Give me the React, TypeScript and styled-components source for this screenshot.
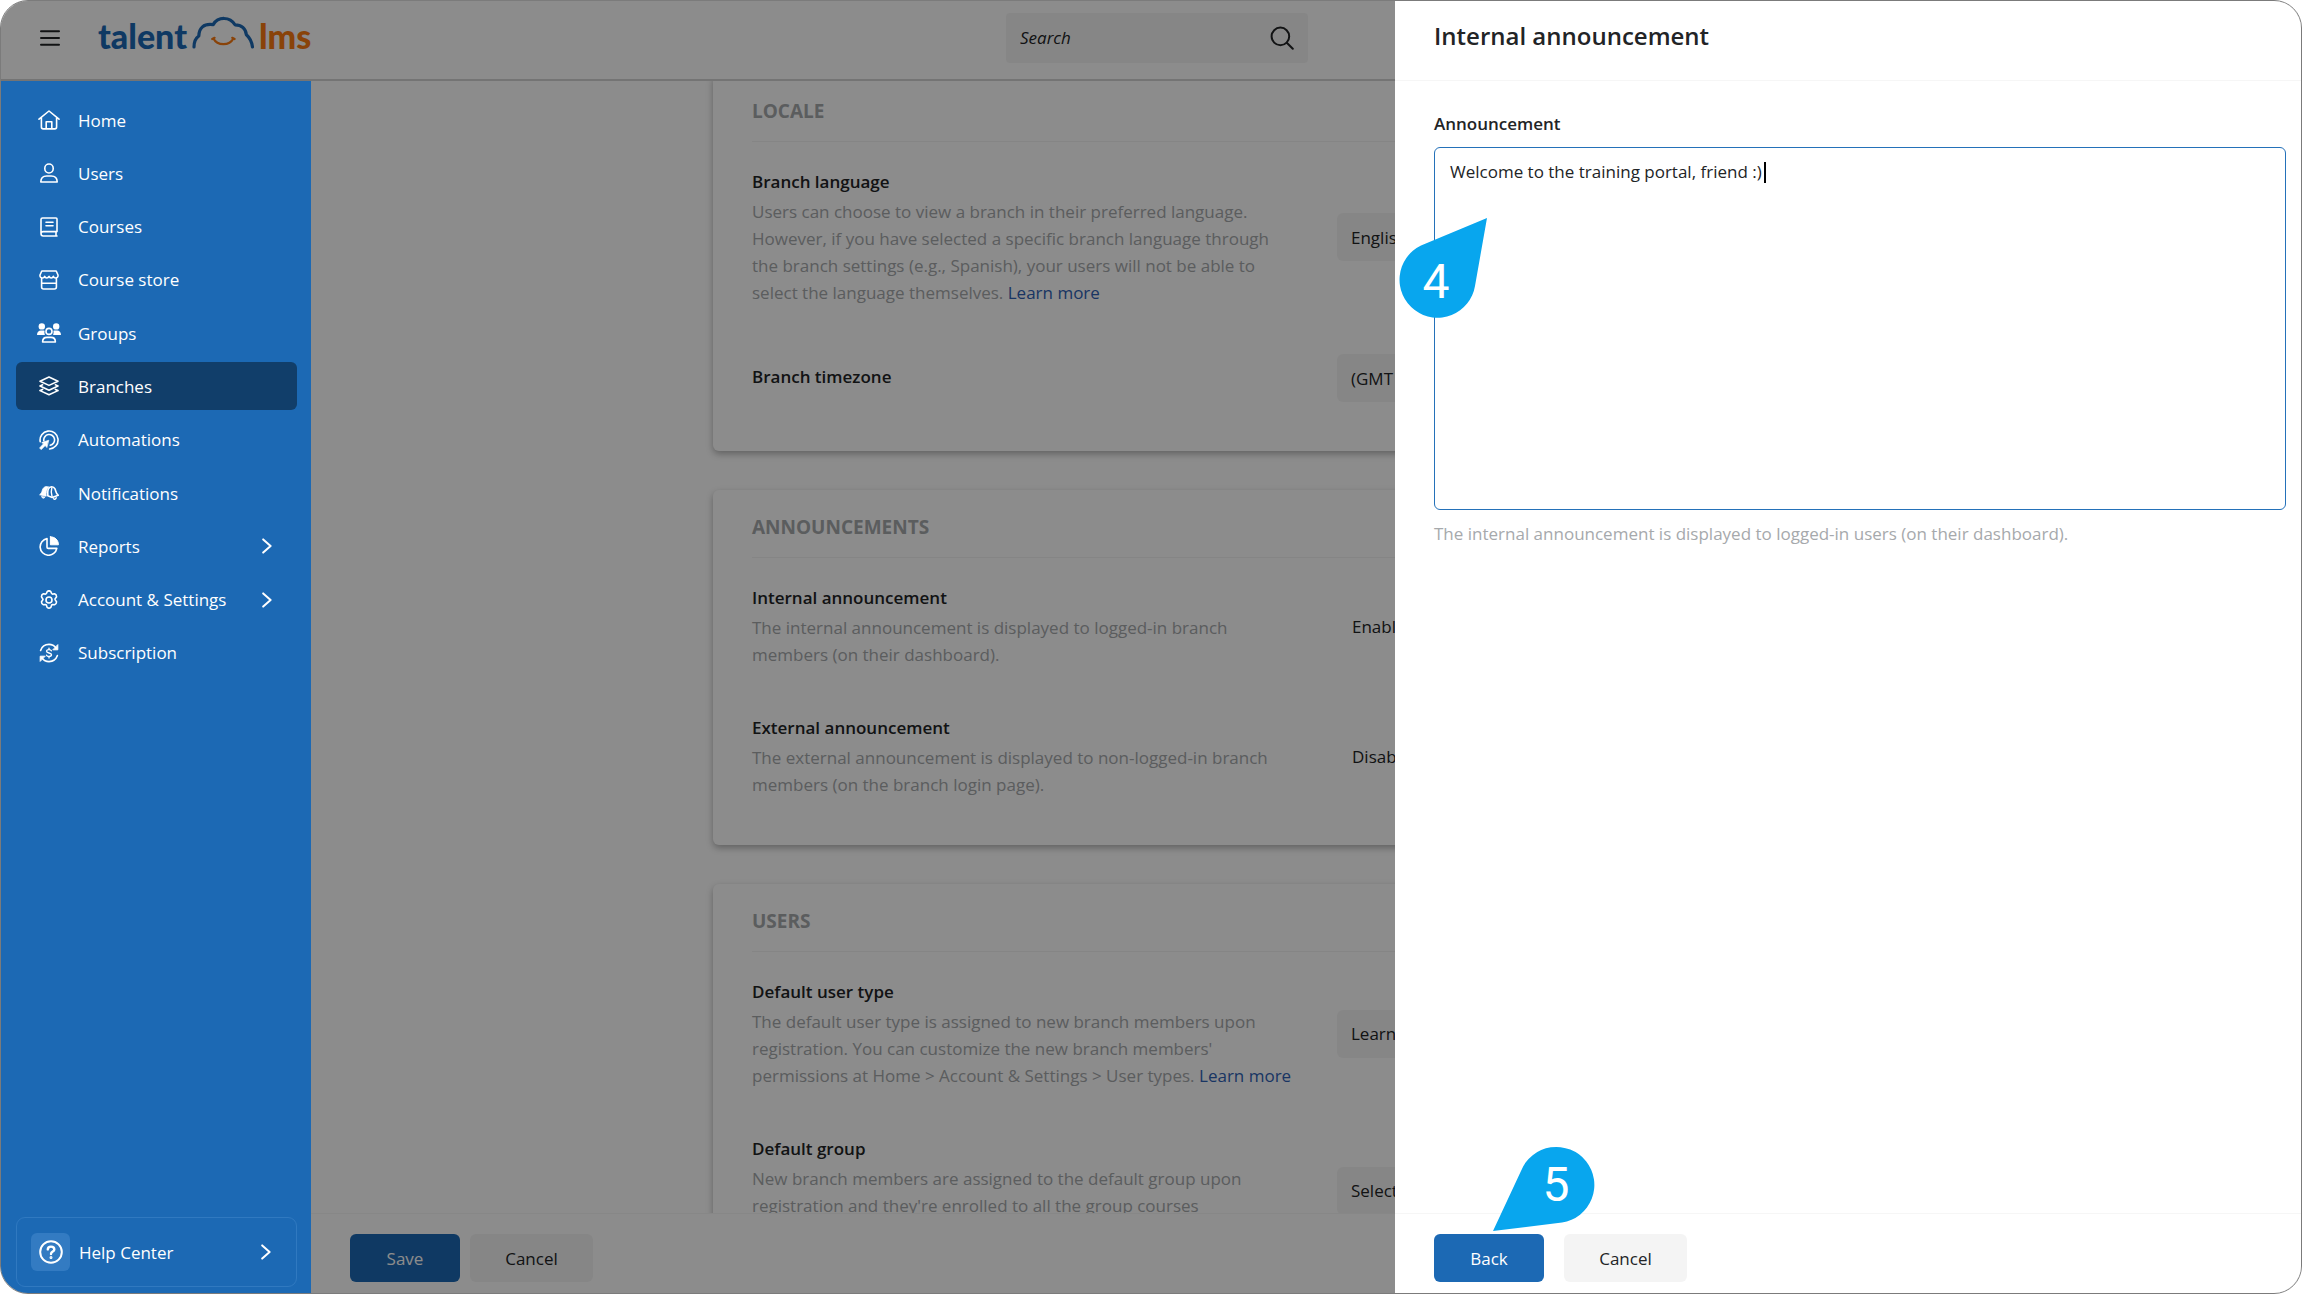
import React, { useId } from 'react';
import styled, { createGlobalStyle, css } from 'styled-components';

const color = {
  primary: '#1c69b4',
  active: '#113e6a',
  ink: '#222426',
  muted: '#a6a9ac',
  field: '#f5f5f5',
  line: '#f6f6f6',
  callout: '#08a6ee',
};

const Global = createGlobalStyle`
  * { box-sizing: border-box; }
  html, body, #root { height: 100%; }
  body { margin: 0; background: #fff; }
  body, button, input, textarea, select {
    font-family: "Open Sans", "Noto Sans", sans-serif;
    font-size: 17px;
    line-height: 27px;
    color: ${color.ink};
  }
`;

const Frame = styled.div`
  position: relative;
  display: flex;
  flex-direction: column;
  height: 100%;
  overflow: hidden;
  border: 1px solid #7b7b7b;
  border-radius: 28px;
  background: #fff;
`;

const Scrim = styled.div`
  position: absolute;
  inset: 0;
  background: rgba(0, 0, 0, 0.45);
`;

/* ---------- top bar ---------- */

const TopBar = styled.header`
  flex: none;
  display: grid;
  grid-template-columns: 1fr 302px 1fr;
  align-items: center;
  height: 80px;
  padding: 0 27px 5px 39px;
  border-bottom: 2px solid #d4d4d4;
`;

const Brand = styled.div`
  display: flex;
  align-items: center;
  gap: 38px;
`;

const IconButton = styled.button`
  display: flex;
  padding: 0;
  border: 0;
  background: none;
`;

const Logo = styled.a`
  display: flex;
  align-items: baseline;
  gap: 4px;
  margin-bottom: 4px;
  font-family: Lato, sans-serif;
  font-size: 34px;
  font-weight: 900;
  line-height: 40px;
  color: ${color.primary};
  text-decoration: none;
`;

const LogoSuffix = styled.span`
  color: #f97a12;
`;

const SearchBox = styled.label`
  display: flex;
  align-items: center;
  height: 50px;
  padding: 0 14px;
  border-radius: 4px;
  background: ${color.field};
`;

const SearchInput = styled.input`
  flex: 1;
  min-width: 0;
  padding: 0;
  border: 0;
  background: none;
  outline: 0;
  &::placeholder {
    color: ${color.ink};
    font-style: italic;
    opacity: 1;
  }
`;

/* ---------- sidebar ---------- */

const Body = styled.div`
  flex: 1;
  display: flex;
  min-height: 0;
`;

const Sidebar = styled.aside`
  position: relative;
  z-index: 1;
  flex: none;
  display: flex;
  flex-direction: column;
  justify-content: space-between;
  width: 310px;
  padding: 15px 14px 6px 15px;
  background: ${color.primary};
`;

const NavList = styled.nav`
  display: flex;
  flex-direction: column;
  justify-content: space-between;
  height: 581px;
`;

const NavLink = styled.a<{ $active?: boolean }>`
  display: flex;
  align-items: center;
  height: 48px;
  padding: 0 25px 0 20px;
  border-radius: 6px;
  color: #fff;
  font-weight: 500;
  text-decoration: none;
  background: ${(p) => (p.$active ? color.active : 'transparent')};
`;

const NavIcon = styled.span`
  flex: none;
  display: flex;
  justify-content: center;
  width: 26px;
  margin-right: 16px;
`;

const NavLabel = styled.span`
  flex: 1;
`;

const HelpLink = styled.a`
  display: flex;
  align-items: center;
  height: 70px;
  padding: 0 25px 0 14px;
  border: 1px solid #3079c0;
  border-radius: 9px;
  color: #fff;
  font-weight: 500;
  text-decoration: none;
`;

const HelpBadge = styled.span`
  display: flex;
  align-items: center;
  justify-content: center;
  width: 39px;
  height: 38px;
  margin-right: 9px;
  border-radius: 6px;
  background: #337bc2;
`;

/* ---------- settings page ---------- */

const Main = styled.main`
  flex: 1;
  display: flex;
  flex-direction: column;
  min-width: 0;
`;

const Scroller = styled.div`
  flex: 1;
  min-height: 0;
  overflow: hidden;
`;

const CardStack = styled.div`
  display: flex;
  flex-direction: column;
  gap: 39px;
  max-width: 1186px;
  margin: -7px auto 0;
`;

const Card = styled.section`
  padding: 0 39px 47px;
  border-radius: 6px;
  box-shadow: 0 3px 7px rgba(0, 0, 0, 0.3);
`;

const CardTitle = styled.h2`
  height: 68px;
  margin: 0 0 26px;
  padding-top: 24px;
  border-bottom: 1px solid #f2f2f2;
  font-size: 19px;
  font-weight: 700;
  line-height: 27px;
  color: ${color.muted};
`;

const Rows = styled.div`
  display: flex;
  flex-direction: column;
  gap: 46px;
`;

const Row = styled.div`
  display: grid;
  grid-template-columns: 545px 1fr;
  column-gap: 40px;
  align-items: center;
  min-height: 52px;
`;

const fieldTitle = css`
  display: block;
  margin: 0 0 3px;
  font-size: 17px;
  font-weight: 600;
  line-height: 27px;
`;

const RowLabel = styled.label`
  ${fieldTitle}
`;

const RowHeading = styled.h3`
  ${fieldTitle}
`;

const Hint = styled.p<{ $lines: number }>`
  min-height: ${(p) => p.$lines * 27}px;
  margin: 0;
  color: ${color.muted};
  white-space: nowrap;
`;

const TextLink = styled.a`
  color: #2f62b5;
  text-decoration: none;
`;

const Select = styled.select`
  appearance: none;
  width: 100%;
  height: 48px;
  padding: 0 14px;
  border: 0;
  border-radius: 6px;
  background: ${color.field};
`;

const State = styled.span`
  padding-left: 15px;
`;

/* ---------- buttons and footers ---------- */

const Footer = styled.footer<{ $gap: number }>`
  flex: none;
  display: flex;
  gap: ${(p) => p.$gap}px;
  padding: 20px 39px 11px;
  border-top: 1px solid ${color.line};
`;

const Button = styled.button<{ $primary?: boolean }>`
  width: ${(p) => (p.$primary ? 110 : 123)}px;
  height: 48px;
  padding: 0;
  border: 0;
  border-radius: 6px;
  background: ${(p) => (p.$primary ? color.primary : '#f4f4f4')};
  color: ${(p) => (p.$primary ? '#fff' : color.ink)};
`;

/* ---------- drawer ---------- */

const Drawer = styled.section`
  position: absolute;
  z-index: 2;
  top: 0;
  right: 0;
  bottom: 0;
  display: flex;
  flex-direction: column;
  width: 906px;
  background: #fff;
`;

const DrawerHeader = styled.header`
  flex: none;
  height: 80px;
  padding: 19px 39px;
  border-bottom: 1px solid ${color.line};
`;

const DrawerTitle = styled.h1`
  margin: 0;
  font-size: 24px;
  font-weight: 600;
  line-height: 32px;
`;

const DrawerBody = styled.div`
  flex: 1;
  padding: 29px 15px 0 39px;
`;

const DrawerLabel = styled.label`
  display: block;
  margin-bottom: 10px;
  font-size: 17px;
  font-weight: 600;
`;

const Editor = styled.div`
  position: relative;
  display: flex;
`;

const TextArea = styled.textarea`
  width: 100%;
  height: 363px;
  padding: 10px 15px;
  border: 1px solid #2471b9;
  border-radius: 6px;
  outline: 0;
  resize: none;
`;

const Caret = styled.span`
  position: absolute;
  top: 15px;
  left: 330px;
  width: 2px;
  height: 21px;
  background: #000;
`;

const DrawerHint = styled.p`
  margin: 10px 0 0;
  color: ${color.muted};
`;

/* ---------- callouts ---------- */

const Pin = styled.svg<{ $right: number; $top?: number; $bottom?: number }>`
  position: absolute;
  z-index: 3;
  right: ${(p) => p.$right}px;
  ${(p) => (p.$top !== undefined ? `top: ${p.$top}px;` : `bottom: ${p.$bottom}px;`)}
  font-family: Roboto, sans-serif;
  font-size: 48px;
`;

/* ---------- icons ---------- */

const Glyph = ({ w = 20, h = 20, children }: { w?: number; h?: number; children: React.ReactNode }) => (
  <svg width={w} height={h} viewBox={`0 0 ${w} ${h}`} fill="none" stroke="currentColor" strokeWidth="1.6" strokeLinecap="round" strokeLinejoin="round" aria-hidden="true">
    {children}
  </svg>
);

const HomeIcon = () => (
  <Glyph w={22}>
    <path d="M1 9.200 11 1l10 8.200M3.400 7.600V17c0 1.200.6 1.900 1.800 1.900h11.600c1.200 0 1.800-.7 1.800-1.900V7.600M8.200 18.600v-6.800h5.600v6.800" />
  </Glyph>
);
const UserIcon = () => (
  <Glyph>
    <rect x="5.800" y="1" width="8.400" height="9" rx="4.200" />
    <path d="M1.800 19c0-4 2.700-6 6-6h4.400c3.300 0 6 2 6 6z" />
  </Glyph>
);
const CourseIcon = () => (
  <Glyph>
    <path d="M18 14.600V2c0-.7-.4-1-1-1H3.600C2.400 1 2 1.600 2 2.600v14c0 1.600.8 2.400 2.200 2.400H18M2 16.800c0-1.400.8-2.200 2.200-2.200H18M17 14.600V19M7 5.200h7M7 8.800h7" />
  </Glyph>
);
const StoreIcon = () => (
  <Glyph>
    <path d="M2.800 1h14.400L19 5c.3 2-1 3-2.400 3-1.200 0-2-.8-2.200-1.600C14 7.400 13.200 8 12.200 8S10.400 7.400 10 6.400C9.600 7.400 8.800 8 7.800 8S6 7.400 5.600 6.400C5.400 7.200 4.600 8 3.400 8 2 8 .7 7 1 5zM2.600 8.200V17c0 1.300.7 2 2 2h10.800c1.300 0 2-.7 2-2V8.200M2.800 13.200h14.400" />
  </Glyph>
);
const GroupIcon = () => (
  <Glyph w={24}>
    <g fill="currentColor" stroke="none">
      <circle cx="4.800" cy="3.400" r="3.200" />
      <circle cx="19.200" cy="3.400" r="3.200" />
      <path d="M0 12c0-3 1.600-4.600 4-4.600h1.800c.7 0 1.300.1 1.800.4-.4 1.400-.3 2.800.3 4.200zM24 12c0-3-1.600-4.600-4-4.600h-1.800c-.7 0-1.300.1-1.800.4.4 1.400.3 2.800-.3 4.200z" />
    </g>
    <circle cx="12" cy="8.400" r="3" />
    <path d="M5.600 19c0-3 2-4.600 4.400-4.600h4c2.400 0 4.400 1.600 4.400 4.600z" />
  </Glyph>
);
const LayersIcon = () => (
  <Glyph>
    <path d="m10 1 9 4.200-9 4.200-9-4.200zM1 10l9 4.200L19 10M1 14.600l9 4.200 9-4.200M1 10l2.600-1.200M19 10l-2.600-1.200M1 14.600l2.600-1.200M19 14.600l-2.600-1.200" />
  </Glyph>
);
const TargetIcon = () => (
  <Glyph>
    <path d="M1.200 11.600A9 9 0 1 1 10.600 19M4.800 10.600a5.400 5.400 0 1 1 6.400 4.600" />
    <path d="M9.400 10.400 2.800 12.600l1.800 1.200-4 4.200 1.600 1.600 4-4.200 1.400 1.800z" fill="currentColor" strokeWidth="0.800" />
  </Glyph>
);
const BellsIcon = () => (
  <Glyph>
    <path d="M9.400 4C7 2.600 4.400 4 3.400 7c-.6 2-1 3.400-2.800 4.800l6.600 1.400c-.4-3 .2-6.400 2.200-9.200zM2.600 13.800c.4 1.600 2.400 2 3.200.6z" fill="currentColor" strokeWidth="0.800" />
    <path d="M8.800 12.800C9 10.600 8.200 8.600 9.400 6c1.200-3 5.200-3 6.600-.2 1 2.200.8 4.800 3.200 6.400l-6 2.200z" />
    <path d="M12.800 4.800c-.8 2.600-.8 6 .4 9.600M14.600 15.800c1 .8 2.400.2 2.600-1.200" strokeWidth="1.400" />
  </Glyph>
);
const PieIcon = () => (
  <Glyph>
    <path d="M8 2.600a8.400 8.400 0 1 0 9.800 9.800H9.200c-.8 0-1.200-.4-1.200-1.200z" />
    <path d="M11.400.8v8h8C19.400 4 16 .8 11.400.8z" fill="currentColor" strokeWidth="1" />
  </Glyph>
);
const GearIcon = () => (
  <Glyph>
    <circle cx="10" cy="10" r="3" />
    <path d="M8.200 1.600c.9-.8 2.700-.8 3.600 0l.8 1.900c.2.400.6.600 1 .6l2-.3c1.200.5 2 1.900 1.900 3.100l-1.200 1.600c-.3.400-.3 1-.1 1.400l1.300 1.800c.1 1.200-.7 2.600-1.900 3.100l-2-.2c-.4 0-.8.2-1 .6l-.8 2.200c-.9.800-2.700.8-3.600 0l-.8-2.200c-.2-.4-.6-.6-1-.6l-2 .2c-1.200-.5-2-1.900-1.900-3.100l1.200-1.600c.3-.4.3-1 0-1.400L2.500 6.900c-.1-1.200.7-2.600 1.900-3.100l2 .3c.4 0 .8-.2 1-.6z" />
  </Glyph>
);
const BillingIcon = () => (
  <Glyph>
    <path d="M1.600 7.400C3 3.400 6.200 1.400 10 1.400c3 0 5.400 1.400 7 3.600M18.400 12.600c-1.400 4-4.600 6-8.400 6-3 0-5.400-1.400-7-3.600" />
    <path d="M18.800 2v4.800h-4.600zM1.200 18v-4.800h4.600z" fill="currentColor" strokeWidth="1" />
    <path d="M12.400 7.800c-.4-.8-1.300-1.200-2.400-1.200-1.400 0-2.400.6-2.400 1.700 0 2.300 4.900 1.100 4.900 3.500 0 1.100-1.100 1.700-2.500 1.700-1.200 0-2.100-.5-2.500-1.300M10 5.200v1.400M10 13.500v1.400" strokeWidth="1.400" />
  </Glyph>
);
const ChevronIcon = () => (
  <Glyph w={10} h={16}>
    <path d="m1.200 1.400 7.400 6.600-7.400 6.600" strokeWidth="2" />
  </Glyph>
);
const HelpIcon = () => (
  <Glyph w={24} h={24}>
    <circle cx="12" cy="12" r="10.800" strokeWidth="2" />
    <path d="M8.800 9.400C8.800 7.600 10.200 6.600 12 6.600s3.300 1 3.300 2.800c0 2.200-3.300 2.200-3.300 4.600" strokeWidth="2.400" />
    <circle cx="12" cy="17.400" r="0.600" strokeWidth="1.800" />
  </Glyph>
);
const MenuIcon = () => (
  <Glyph w={20} h={18}>
    <path d="M1 2.200h18M1 9h18M1 15.800h18" strokeWidth="2" />
  </Glyph>
);
const SearchIcon = () => (
  <Glyph w={24} h={24}>
    <circle cx="10.400" cy="10.400" r="8.800" strokeWidth="2" />
    <path d="m16.800 16.800 6 6" strokeWidth="2" />
  </Glyph>
);
const CloudMark = () => (
  <svg width="64" height="34" viewBox="0 0 64 34" fill="none" strokeLinecap="round" strokeLinejoin="round" aria-hidden="true">
    <path d="M3 32c0-5 1.600-8.800 4.800-11C8 13.200 12.600 8.200 22.200 9.600 27 1.400 39 1.400 44 9.800 50.500 9.800 54.800 13.400 55.400 19.800 59 23 60.800 27 61.500 32" stroke="currentColor" strokeWidth="3.200" />
    <path d="M22.400 23.400c4 7.600 16 7.600 20 0M21.200 24l2.400-1.200M41.200 22.800l2.400 1.200" stroke="#f97a12" strokeWidth="2.200" />
  </svg>
);

/* ---------- content ---------- */

const navItems = [
  { label: 'Home', Icon: HomeIcon },
  { label: 'Users', Icon: UserIcon },
  { label: 'Courses', Icon: CourseIcon },
  { label: 'Course store', Icon: StoreIcon },
  { label: 'Groups', Icon: GroupIcon },
  { label: 'Branches', Icon: LayersIcon, active: true },
  { label: 'Automations', Icon: TargetIcon },
  { label: 'Notifications', Icon: BellsIcon },
  { label: 'Reports', Icon: PieIcon, expandable: true },
  { label: 'Account & Settings', Icon: GearIcon, expandable: true },
  { label: 'Subscription', Icon: BillingIcon },
];

type Setting = {
  title: string;
  hint?: string[];
  hintLines?: number;
  more?: boolean;
  option?: string;
  state?: string;
};

const cards: { title: string; settings: Setting[] }[] = [
  {
    title: 'LOCALE',
    settings: [
      {
        title: 'Branch language',
        hint: [
          'Users can choose to view a branch in their preferred language.',
          'However, if you have selected a specific branch language through',
          'the branch settings (e.g., Spanish), your users will not be able to',
          'select the language themselves.',
        ],
        more: true,
        option: 'English',
      },
      { title: 'Branch timezone', option: '(GMT +00:00)' },
    ],
  },
  {
    title: 'ANNOUNCEMENTS',
    settings: [
      {
        title: 'Internal announcement',
        hint: ['The internal announcement is displayed to logged-in branch', 'members (on their dashboard).'],
        state: 'Enabled',
      },
      {
        title: 'External announcement',
        hint: ['The external announcement is displayed to non-logged-in branch', 'members (on the branch login page).'],
        state: 'Disabled',
      },
    ],
  },
  {
    title: 'USERS',
    settings: [
      {
        title: 'Default user type',
        hint: [
          'The default user type is assigned to new branch members upon',
          "registration. You can customize the new branch members'",
          'permissions at Home > Account & Settings > User types.',
        ],
        more: true,
        option: 'Learner-Type',
      },
      {
        title: 'Default group',
        hint: [
          'New branch members are assigned to the default group upon',
          "registration and they're enrolled to all the group courses",
        ],
        hintLines: 3,
        option: 'Select a group',
      },
    ],
  },
];

const SettingRow = ({ title, hint, hintLines, more, option, state }: Setting) => {
  const id = useId();
  return (
    <Row>
      <div>
        {option ? <RowLabel htmlFor={id}>{title}</RowLabel> : <RowHeading>{title}</RowHeading>}
        {hint && (
          <Hint $lines={hintLines ?? hint.length}>
            {hint.map((line, i) => (
              <React.Fragment key={line}>
                {i > 0 && <br />}
                {line}
              </React.Fragment>
            ))}
            {more && (
              <>
                {' '}
                <TextLink href="#">Learn more</TextLink>
              </>
            )}
          </Hint>
        )}
      </div>
      {option ? (
        <Select id={id}>
          <option>{option}</option>
        </Select>
      ) : (
        <State>{state}</State>
      )}
    </Row>
  );
};

export default function App() {
  return (
    <>
      <Global />
      <Frame>
        <TopBar>
          <Brand>
            <IconButton aria-label="Menu">
              <MenuIcon />
            </IconButton>
            <Logo href="#">
              talent
              <CloudMark />
              <LogoSuffix>lms</LogoSuffix>
            </Logo>
          </Brand>
          <SearchBox>
            <SearchInput type="text" placeholder="Search" aria-label="Search" />
            <SearchIcon />
          </SearchBox>
        </TopBar>

        <Body>
          <Sidebar>
            <NavList>
              {navItems.map(({ label, Icon, active, expandable }) => (
                <NavLink href="#" key={label} $active={active}>
                  <NavIcon>
                    <Icon />
                  </NavIcon>
                  <NavLabel>{label}</NavLabel>
                  {expandable && <ChevronIcon />}
                </NavLink>
              ))}
            </NavList>
            <HelpLink href="#">
              <HelpBadge>
                <HelpIcon />
              </HelpBadge>
              <NavLabel>Help Center</NavLabel>
              <ChevronIcon />
            </HelpLink>
          </Sidebar>

          <Main>
            <Scroller>
              <CardStack>
                {cards.map((card) => (
                  <Card key={card.title}>
                    <CardTitle>{card.title}</CardTitle>
                    <Rows>
                      {card.settings.map((setting) => (
                        <SettingRow key={setting.title} {...setting} />
                      ))}
                    </Rows>
                  </Card>
                ))}
              </CardStack>
            </Scroller>
            <Footer $gap={10}>
              <Button $primary>Save</Button>
              <Button>Cancel</Button>
            </Footer>
          </Main>
        </Body>

        <Scrim />

        <Drawer>
          <DrawerHeader>
            <DrawerTitle>Internal announcement</DrawerTitle>
          </DrawerHeader>
          <DrawerBody>
            <DrawerLabel htmlFor="announcement">Announcement</DrawerLabel>
            <Editor>
              <TextArea id="announcement" defaultValue="Welcome to the training portal, friend :)" />
              <Caret />
            </Editor>
            <DrawerHint>The internal announcement is displayed to logged-in users (on their dashboard).</DrawerHint>
          </DrawerBody>
          <Footer $gap={20}>
            <Button $primary>Back</Button>
            <Button>Cancel</Button>
          </Footer>
        </Drawer>

        <Pin $right={813} $top={216} width="90" height="102" viewBox="0 0 90 102">
          <path d="M89 1 77 69A38 38 0 1 1 23 28.500Z" fill={color.callout} />
          <text x="38" y="81" textAnchor="middle" fill="#fff">4</text>
        </Pin>
        <Pin $right={705} $bottom={60} width="104" height="88" viewBox="0 0 104 88">
          <path d="M1 86 29 26A38 38 0 1 1 70 77.500Z" fill={color.callout} />
          <text x="64" y="56" textAnchor="middle" fill="#fff">5</text>
        </Pin>
      </Frame>
    </>
  );
}
